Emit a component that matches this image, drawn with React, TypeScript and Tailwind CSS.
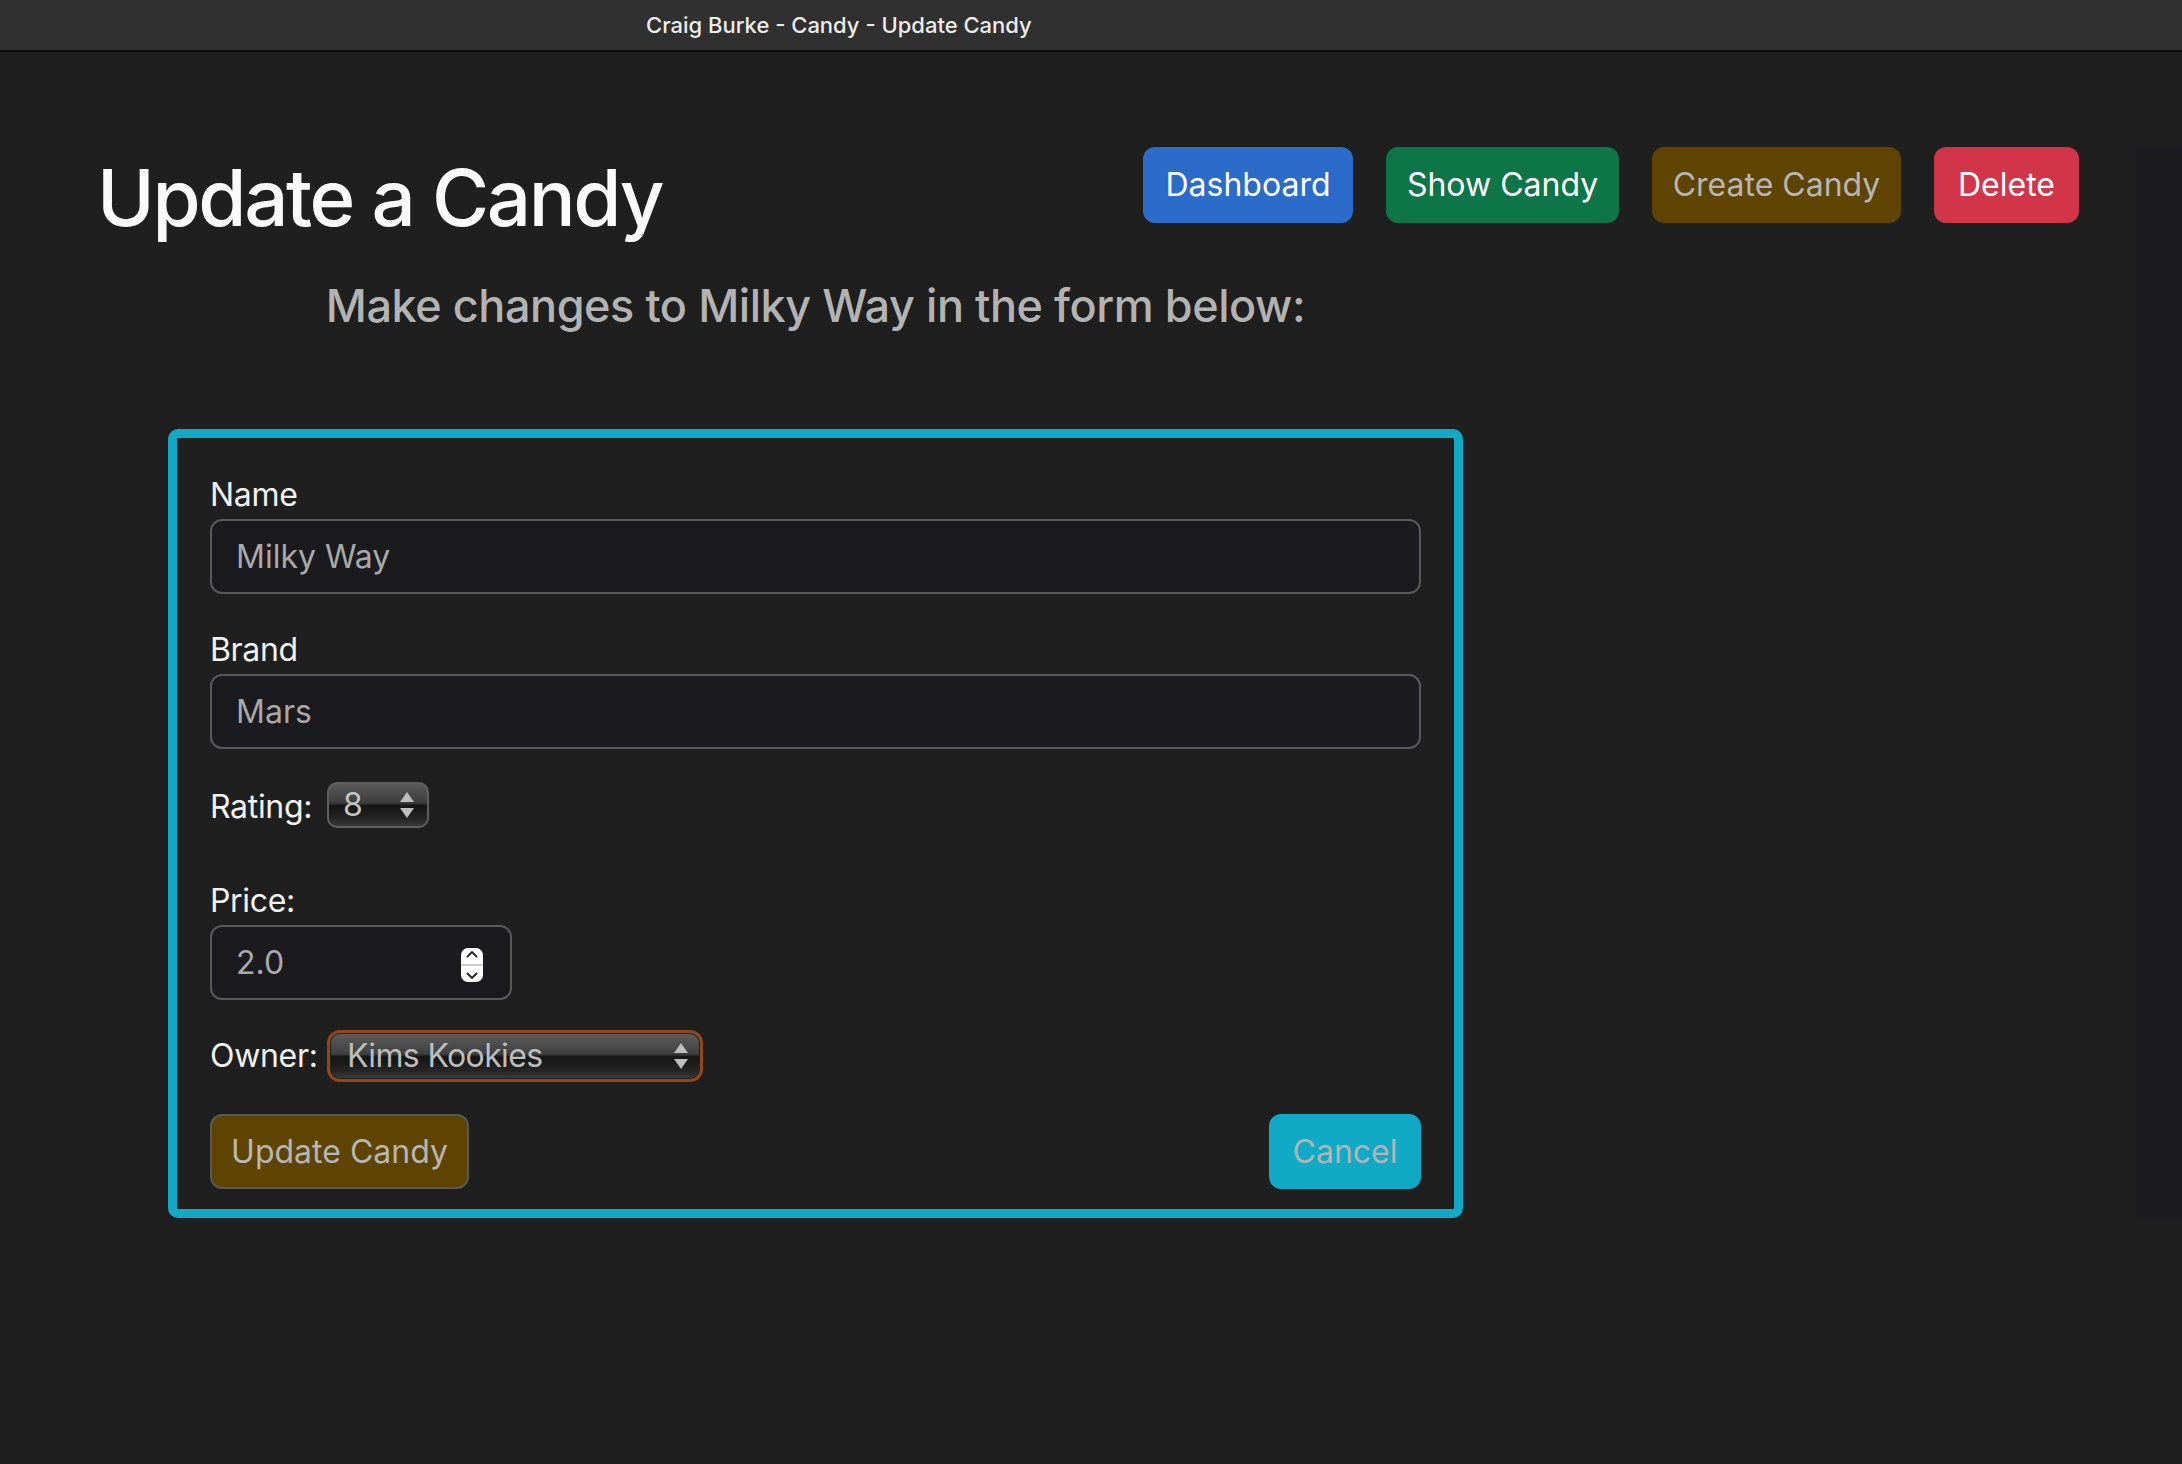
import React from "react";

function UpDown({ className }: { className?: string }) {
  return (
    <svg viewBox="0 0 16 30" className={className}>
      <path d="M8 2 L15 12 L1 12 Z" fill="#bdbdbd" />
      <path d="M8 28 L15 18 L1 18 Z" fill="#bdbdbd" />
    </svg>
  );
}

function Label({ children }: { children: React.ReactNode }) {
  return <div className="text-[32px] leading-[48px] tracking-[-0.01em] text-[#f2f2f2]">{children}</div>;
}

export default function App() {
  return (
    <div className="min-h-[1464px] w-[2182px] bg-[#1f1f1f] font-['Inter',sans-serif] text-white">
      <div className="flex h-[52px] items-center border-b-2 border-[#0d0d0d] bg-[#303030] pl-[646px]">
        <span className="text-[22px] font-medium text-[#ececec]">Craig Burke - Candy - Update Candy</span>
      </div>
      <div className="flex">
        <div className="flex-1 pl-[97px] pr-[57px] pt-[95px]">
          <div className="flex items-start justify-between">
            <h1 className="mt-[3px] text-[78px] font-medium leading-[96px] tracking-[-0.03em] text-[#fafafa]">Update a Candy</h1>
            <div className="flex gap-[33px]">
              <button className="h-[76px] w-[210px] rounded-[12px] bg-[#2b6bca] text-[32px] text-white">Dashboard</button>
              <button className="h-[76px] w-[233px] rounded-[12px] bg-[#0e7549] text-[32px] text-white">Show Candy</button>
              <button className="h-[76px] w-[249px] rounded-[12px] bg-[#5e4400] text-[32px] text-[#b6b6b6]">Create Candy</button>
              <button className="h-[76px] w-[145px] rounded-[12px] bg-[#d2344a] text-[32px] text-white">Delete</button>
            </div>
          </div>

          <h4 className="ml-[71px] mt-[31px] w-[1295px] text-center text-[45px] font-medium leading-[58px] tracking-[-0.01em] text-[#b3b3b3]">
            Make changes to Milky Way in the form below:
          </h4>

          <form className="ml-[71px] mt-[94px] w-[1295px] rounded-[10px] border-[9px] border-[#10aac7] px-[33px] pb-[20px] pt-[33px]">
            <Label>Name</Label>
            <div className="flex h-[75px] items-center rounded-[12px] border-2 border-[#595959] bg-[#1b1a1f] px-[24px] text-[32px] text-[#a9a9a9]">
              Milky Way
            </div>

            <div className="mt-[32px]">
              <Label>Brand</Label>
            </div>
            <div className="flex h-[75px] items-center rounded-[12px] border-2 border-[#595959] bg-[#1b1a1f] px-[24px] text-[32px] text-[#a9a9a9]">
              Mars
            </div>

            <div className="mt-[34px] flex items-center">
              <div className="w-[117px]">
                <Label>Rating:</Label>
              </div>
              <div className="relative -mt-[4px] flex h-[46px] w-[102px] items-center rounded-[10px] border-2 border-[#5e5e5e] bg-[linear-gradient(180deg,#5a5a5a_0%,#3c3c3c_45%,#141414_52%,#262626_85%,#3a3a3a_100%)] pl-[14px]">
                <span className="text-[32px] leading-none text-[#c4c4c4]">8</span>
                <UpDown className="absolute right-[12px] top-[6px] h-[30px] w-[16px]" />
              </div>
            </div>

            <div className="mt-[46px]">
              <Label>Price:</Label>
            </div>
            <div className="relative flex h-[75px] w-[302px] items-center rounded-[12px] border-2 border-[#595959] bg-[#1b1a1f] px-[24px] text-[32px] text-[#a9a9a9]">
              2.0
              <div className="absolute right-[27px] top-[21px] flex h-[34px] w-[22px] flex-col items-center justify-between rounded-[7px] bg-white py-[3px]">
                <svg viewBox="0 0 12 7" className="h-[7px] w-[12px]">
                  <path d="M1 6 L6 1 L11 6" fill="none" stroke="#222" strokeWidth="1.8" />
                </svg>
                <div className="h-[2px] w-full bg-[#cfcfcf]" />
                <svg viewBox="0 0 12 7" className="h-[7px] w-[12px]">
                  <path d="M1 1 L6 6 L11 1" fill="none" stroke="#222" strokeWidth="1.8" />
                </svg>
              </div>
            </div>

            <div className="mt-[30px] flex items-center">
              <div className="w-[117px]">
                <Label>Owner:</Label>
              </div>
              <div className="rounded-[13px] border-[3px] border-[#93471a] p-[1px]">
                <div className="relative flex h-[44px] w-[368px] items-center rounded-[9px] bg-[linear-gradient(180deg,#5c5c5c_0%,#404040_45%,#141414_52%,#262626_85%,#3a3a3a_100%)] pl-[16px]">
                  <span className="text-[32px] leading-none tracking-[-0.02em] text-[#bdbdbd]">Kims Kookies</span>
                  <UpDown className="absolute right-[10px] top-[7px] h-[30px] w-[16px]" />
                </div>
              </div>
            </div>

            <div className="mt-[32px] flex justify-between">
              <button type="button" className="h-[75px] w-[259px] rounded-[12px] border-2 border-[#585858] bg-[#5e4400] text-[32px] text-[#b6b6b6]">
                Update Candy
              </button>
              <button type="button" className="h-[75px] w-[152px] rounded-[12px] bg-[#10aac7] text-[32px] text-[#b4b4b4]">
                Cancel
              </button>
            </div>
          </form>
        </div>
        <div className="mt-[95px] h-[1071px] w-[46px] bg-[#1b1a1f]" />
      </div>
    </div>
  );
}
